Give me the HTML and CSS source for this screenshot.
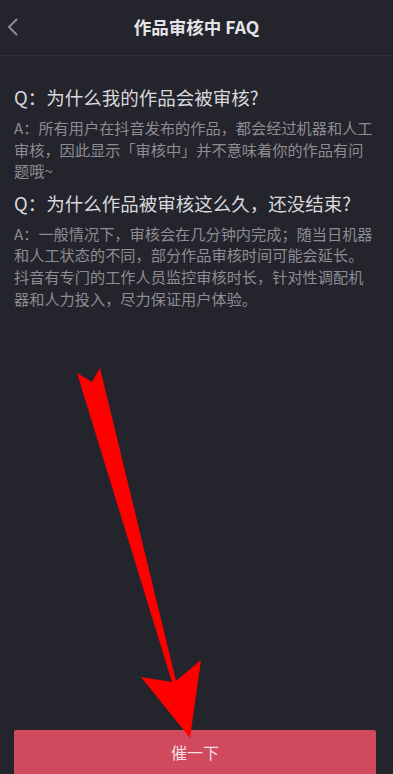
FILE: index.html
```html
<!DOCTYPE html>
<html lang="zh-CN">
<head>
    <meta charset="UTF-8">
    <meta name="viewport" content="width=device-width, initial-scale=1.0">
    <title>作品审核中 FAQ</title>
    <link rel="stylesheet" href="styles.css">
</head>
<body>
    <div class="page">
        <header class="top-bar">
            <span class="back">
                <svg width="14" height="20" viewBox="0 0 14 20"><path d="M11 2 L3 10 L11 18" fill="none" stroke="#8b8b92" stroke-width="2"/></svg>
            </span>
            <h1 class="title">作品审核中 FAQ</h1>
        </header>

        <div class="faq">
            <p class="question">Q：为什么我的作品会被审核?</p>
            <p class="answer">A：所有用户在抖音发布的作品，都会经过机器和人工审核，因此显示「审核中」并不意味着你的作品有问题哦~</p>
            <p class="question">Q：为什么作品被审核这么久，还没结束?</p>
            <p class="answer">A：一般情况下，审核会在几分钟内完成；随当日机器和人工状态的不同，部分作品审核时间可能会延长。抖音有专门的工作人员监控审核时长，针对性调配机器和人力投入，尽力保证用户体验。</p>
        </div>

        <button class="urge-btn">催一下</button>

        <!-- red annotation arrow on top of the screenshot -->
        <svg class="arrow" width="393" height="774" viewBox="0 0 393 774">
            <polygon fill="#ff0000" points="77,373 92,382 100,368 176,681 201,660 190,738 141,677 172,682"/>
        </svg>
    </div>
</body>
</html>
```

FILE: styles.css
```css
*{
    margin: 0;
    padding: 0;
    box-sizing: border-box;
}
body{
    background: #24242c;
    font-family: "Noto Sans CJK SC", "Noto Sans", sans-serif;
}
.page{
    position: relative;
    height: 774px;
    display: flex;
    flex-direction: column;
    overflow: hidden;
}
.top-bar{
    height: 56px;
    display: flex;
    align-items: center;
    justify-content: center;
    border-bottom: 1px solid #2f2f38;
    position: relative;
}
.top-bar .back{
    position: absolute;
    left: 6px;
    top: 17px;
}
.top-bar .title{
    font-size: 17.5px;
    font-weight: 700;
    color: #e4e4e8;
    margin-top: -2px;
}
.faq{
    padding: 27px 19px 0 14px;
}
.faq .question{
    font-size: 18.5px;
    line-height: 28px;
    color: #d9d9dd;
    margin-bottom: 6px;
}
.faq .answer{
    font-size: 15.2px;
    line-height: 21.6px;
    color: #8d8d93;
    margin-bottom: 7px;
}
.urge-btn{
    margin: auto 17px 0 14px;
    height: 44px;
    border: none;
    border-radius: 2px 2px 0 0;
    background: #d0495d;
    color: #f2dfe2;
    font-family: inherit;
    font-size: 16px;
}
.arrow{
    position: absolute;
    left: 0;
    top: 0;
    pointer-events: none;
}
```
